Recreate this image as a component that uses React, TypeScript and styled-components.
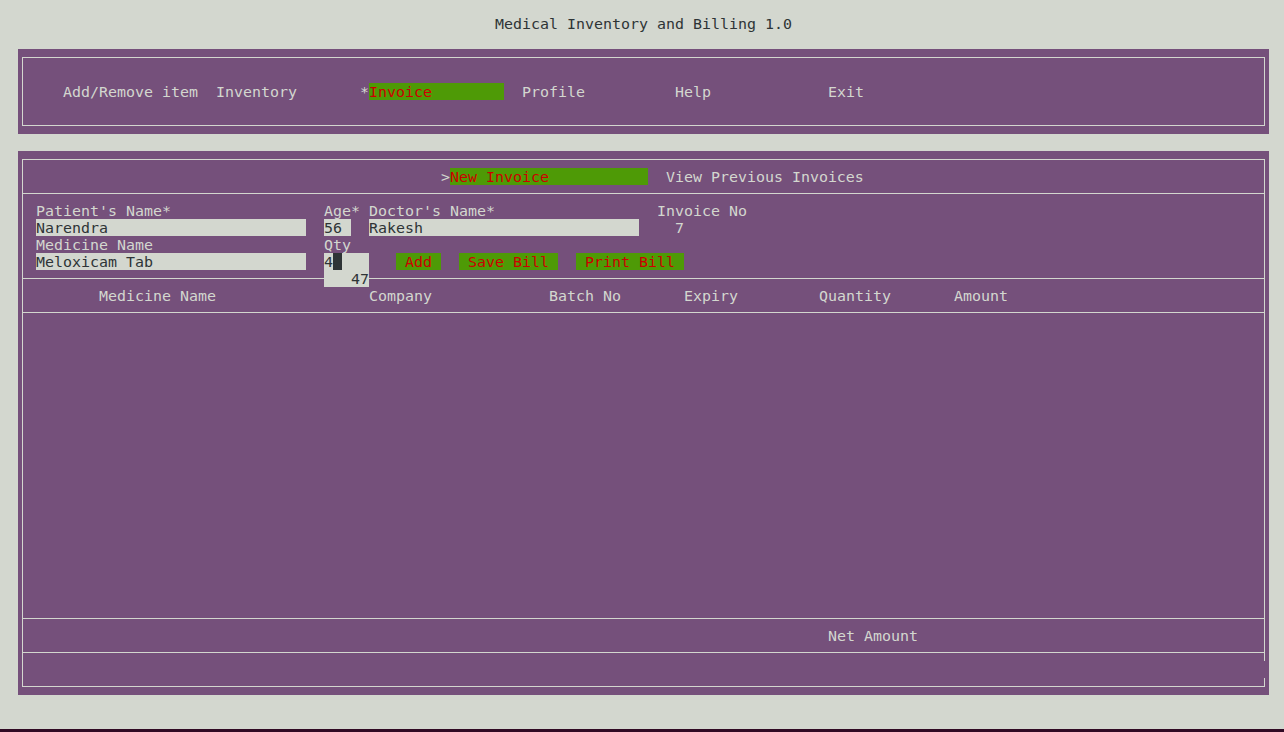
import React from 'react';
import styled, { createGlobalStyle } from 'styled-components';

const GlobalStyle = createGlobalStyle`
  html, body {
    margin: 0;
    padding: 0;
    background: #300a24;
  }
  body {
    font-family: "DejaVu Sans Mono", "Liberation Mono", monospace;
    font-size: 14.95px;
    line-height: 17px;
  }
`;

const menu = [
  { col: 5, label: 'Add/Remove item' },
  { col: 22, label: 'Inventory' },
  { col: 56, label: 'Profile' },
  { col: 73, label: 'Help' },
  { col: 90, label: 'Exit' },
];

const columns = [
  { col: 9, label: 'Medicine Name' },
  { col: 39, label: 'Company' },
  { col: 59, label: 'Batch No' },
  { col: 74, label: 'Expiry' },
  { col: 89, label: 'Quantity' },
  { col: 104, label: 'Amount' },
];

type CellProps = { $col: number; $span?: number; $row?: number };

const App: React.FC = () => {
  return (
    <>
      <GlobalStyle />
      <Screen>
        <Title>Medical Inventory and Billing 1.0</Title>

        <Panel>
          <Box>
            <MenuBar>
              {menu.map((m) => (
                <Text key={m.label} $col={m.col} $span={m.label.length}>
                  {m.label}
                </Text>
              ))}
              <Text $col={38}>*</Text>
              <Selected $col={39} $span={15}>Invoice</Selected>
            </MenuBar>
          </Box>
        </Panel>

        <Panel>
          <Box>
            <Section>
              <Grid>
                <Text $col={47}>&gt;</Text>
                <Selected $col={48} $span={22}>New Invoice</Selected>
                <Text $col={72} $span={22}>View Previous Invoices</Text>
              </Grid>
            </Section>

            <Section>
              <Grid>
                <Text $row={1} $col={2} $span={15}>Patient's Name*</Text>
                <Text $row={1} $col={34} $span={4}>Age*</Text>
                <Text $row={1} $col={39} $span={14}>Doctor's Name*</Text>
                <Text $row={1} $col={71} $span={10}>Invoice No</Text>

                <Field $row={2} $col={2} $span={30}>Narendra</Field>
                <Field $row={2} $col={34} $span={3}>56</Field>
                <Field $row={2} $col={39} $span={30}>Rakesh</Field>
                <Text $row={2} $col={73}>7</Text>

                <Text $row={3} $col={2} $span={13}>Medicine Name</Text>
                <Text $row={3} $col={34} $span={3}>Qty</Text>

                <Field $row={4} $col={2} $span={30}>Meloxicam Tab</Field>
                <QtyBox $row={4} $col={34} $span={5}>
                  <QtyLine>
                    <QtyText>4</QtyText>
                    <Cursor />
                  </QtyLine>
                  <QtyHint>47</QtyHint>
                </QtyBox>
                <Button $row={4} $col={42} $span={5}>Add</Button>
                <Button $row={4} $col={49} $span={11}>Save Bill</Button>
                <Button $row={4} $col={62} $span={12}>Print Bill</Button>
              </Grid>
            </Section>

            <Section>
              <Grid>
                {columns.map((c) => (
                  <Text key={c.label} $col={c.col} $span={c.label.length}>
                    {c.label}
                  </Text>
                ))}
              </Grid>
            </Section>

            <TableBody />

            <Section>
              <Grid>
                <Text $col={90} $span={10}>Net Amount</Text>
              </Grid>
            </Section>

            <LastSection>
              <Grid />
              <BorderGap />
            </LastSection>
          </Box>
        </Panel>
      </Screen>
    </>
  );
};

const Screen = styled.div`
  height: 729px;
  box-sizing: border-box;
  padding-top: 15px;
  background: #d3d7cf;
  color: #2e3436;
  display: flex;
  flex-direction: column;
  gap: 17px;
  overflow: hidden;
`;

const Title = styled.div`
  height: 17px;
  box-sizing: border-box;
  padding: 1px 0 0 3px;
  text-align: center;
  white-space: pre;
`;

const Panel = styled.div`
  margin-left: 18px;
  width: 1251px;
  box-sizing: border-box;
  padding: 8px 4px;
  background: #75507b;
`;

const Box = styled.div`
  border: 1px solid #d3d7cf;
  display: flex;
  flex-direction: column;
`;

const Grid = styled.div`
  display: grid;
  grid-template-columns: repeat(137, 9px);
  grid-auto-rows: 17px;
  min-height: 17px;
  padding-left: 4px;
`;

const MenuBar = styled(Grid)`
  padding-top: 25px;
  padding-bottom: 25px;
`;

const Section = styled.div`
  padding: 8px 0;
  border-bottom: 1px solid #d3d7cf;
`;

const TableBody = styled(Section)`
  height: 289px;
`;

const LastSection = styled.div`
  position: relative;
  padding: 8px 0;
`;

const BorderGap = styled.div`
  position: absolute;
  top: 8px;
  right: -1px;
  width: 1px;
  height: 17px;
  background: #75507b;
`;

const Cell = styled.div<CellProps>`
  grid-column: ${(p) => p.$col} / span ${(p) => p.$span ?? 1};
  grid-row: ${(p) => p.$row ?? 1};
  height: 17px;
  box-sizing: border-box;
  padding-top: 1px;
  white-space: pre;
`;

const Text = styled(Cell)`
  color: #d3d7cf;
`;

const Field = styled(Cell)`
  background: #d3d7cf;
  color: #2e3436;
`;

const Selected = styled(Cell)`
  background: #4e9a06;
  color: #cc0000;
`;

const Button = styled(Selected)`
  text-align: center;
`;

const QtyBox = styled(Field)`
  position: relative;
  z-index: 1;
  height: 34px;
  padding-top: 0;
`;

const QtyLine = styled.div`
  height: 17px;
  display: flex;
  align-items: flex-start;
`;

const QtyText = styled.span`
  padding-top: 1px;
`;

const QtyHint = styled.div`
  height: 17px;
  box-sizing: border-box;
  padding-top: 1px;
  text-align: right;
`;

const Cursor = styled.span`
  display: inline-block;
  width: 9px;
  height: 17px;
  background: #2e3436;
`;

export default App;
